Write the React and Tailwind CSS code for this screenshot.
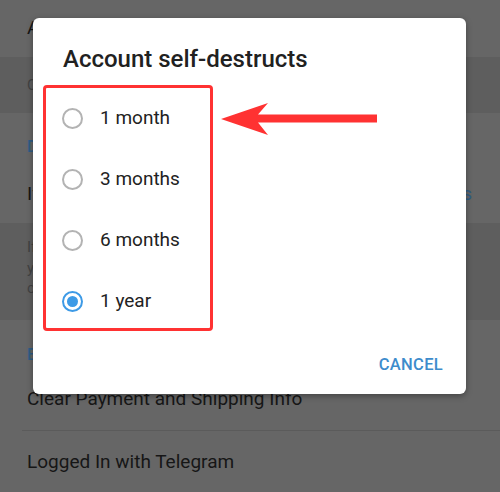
import React from "react";

const options = ["1 month", "3 months", "6 months", "1 year"];

function Radio({ checked }) {
  if (checked) {
    return (
      <span className="flex h-[21px] w-[21px] shrink-0 items-center justify-center rounded-full border-2 border-[#3d9ae6]">
        <span className="h-[11px] w-[11px] rounded-full bg-[#3d9ae6]" />
      </span>
    );
  }
  return <span className="h-[21px] w-[21px] shrink-0 rounded-full border-2 border-[#b3b3b3]" />;
}

export default function App() {
  return (
    <div className="relative h-[492px] w-[500px] overflow-hidden bg-[#666666] font-['Roboto','Noto_Sans',sans-serif]">
      {/* dimmed settings screen */}
      <div className="flex flex-col">
        <div className="flex h-[57px] items-center px-[27px] text-[19px] text-[#161616]">Active Sessions</div>
        <div className="flex h-[56px] items-center bg-[#5e5e5e] px-[27px] text-[15px] text-[#424242]">
          Control your sessions on other devices.
        </div>
        <div className="flex h-[110px] flex-col px-[27px]">
          <div className="pt-[24px] text-[16px] font-medium leading-[20px] text-[#2f5d85]">Delete my account</div>
          <div className="mt-[26px] flex items-center justify-between text-[19px] leading-[22px] text-[#161616]">
            <span>If away for</span>
            <span className="pr-[1px] text-[#2f5d85]">6 months</span>
          </div>
        </div>
        <div className="h-[97px] bg-[#5e5e5e] px-[27px] pt-[14px] text-[15px] leading-[20.5px] text-[#424242]">
          If you do not come online at least once
          <br />
          your account will be deleted along
          <br />
          contacts.
        </div>
        <div className="flex flex-col pl-[27px]">
          <div className="pt-[25px] text-[16px] font-medium leading-[20px] text-[#2f5d85]">Bots and websites</div>
          <div className="flex h-[65px] items-center pt-[4px] text-[19px] text-[#161616]">Clear Payment and Shipping Info</div>
          <div className="ml-[-5px] h-px bg-[#5b5b5b]" />
          <div className="flex h-[62px] items-center text-[19px] text-[#161616]">Logged In with Telegram</div>
        </div>
      </div>

      {/* dialog */}
      <div className="absolute left-[33px] top-[18px] flex h-[376px] w-[433px] flex-col rounded-[6px] bg-white shadow-[0_2px_6px_rgba(0,0,0,0.35)]">
        <div className="pl-[30px] pt-[27px] text-[24px] font-medium leading-[28px] text-[#212121]">
          Account self-destructs
        </div>
        <div className="ml-[10px] mt-[12px] flex h-[246px] w-[170px] flex-col rounded-[4px] border-[3px] border-[#ff3232]">
          {options.map((o, i) => (
            <div key={o} className="flex h-[61px] shrink-0 items-center pl-[16px]">
              <Radio checked={i === 3} />
              <span className="ml-[17px] text-[19px] text-[#222222]">{o}</span>
            </div>
          ))}
        </div>
        <div className="mt-auto flex justify-end pb-[16px] pr-[23px]">
          <span className="text-[16.5px] font-medium tracking-[0.3px] text-[#3d8ccc]">CANCEL</span>
        </div>
      </div>

      {/* annotation arrow */}
      <svg className="absolute left-0 top-0" width="500" height="492" viewBox="0 0 500 492">
        <path d="M221 119 L268 103 L258 114.5 L377 114.5 L377 122.5 L258 122.5 L268 135 Z" fill="#ff3232" />
      </svg>
    </div>
  );
}
